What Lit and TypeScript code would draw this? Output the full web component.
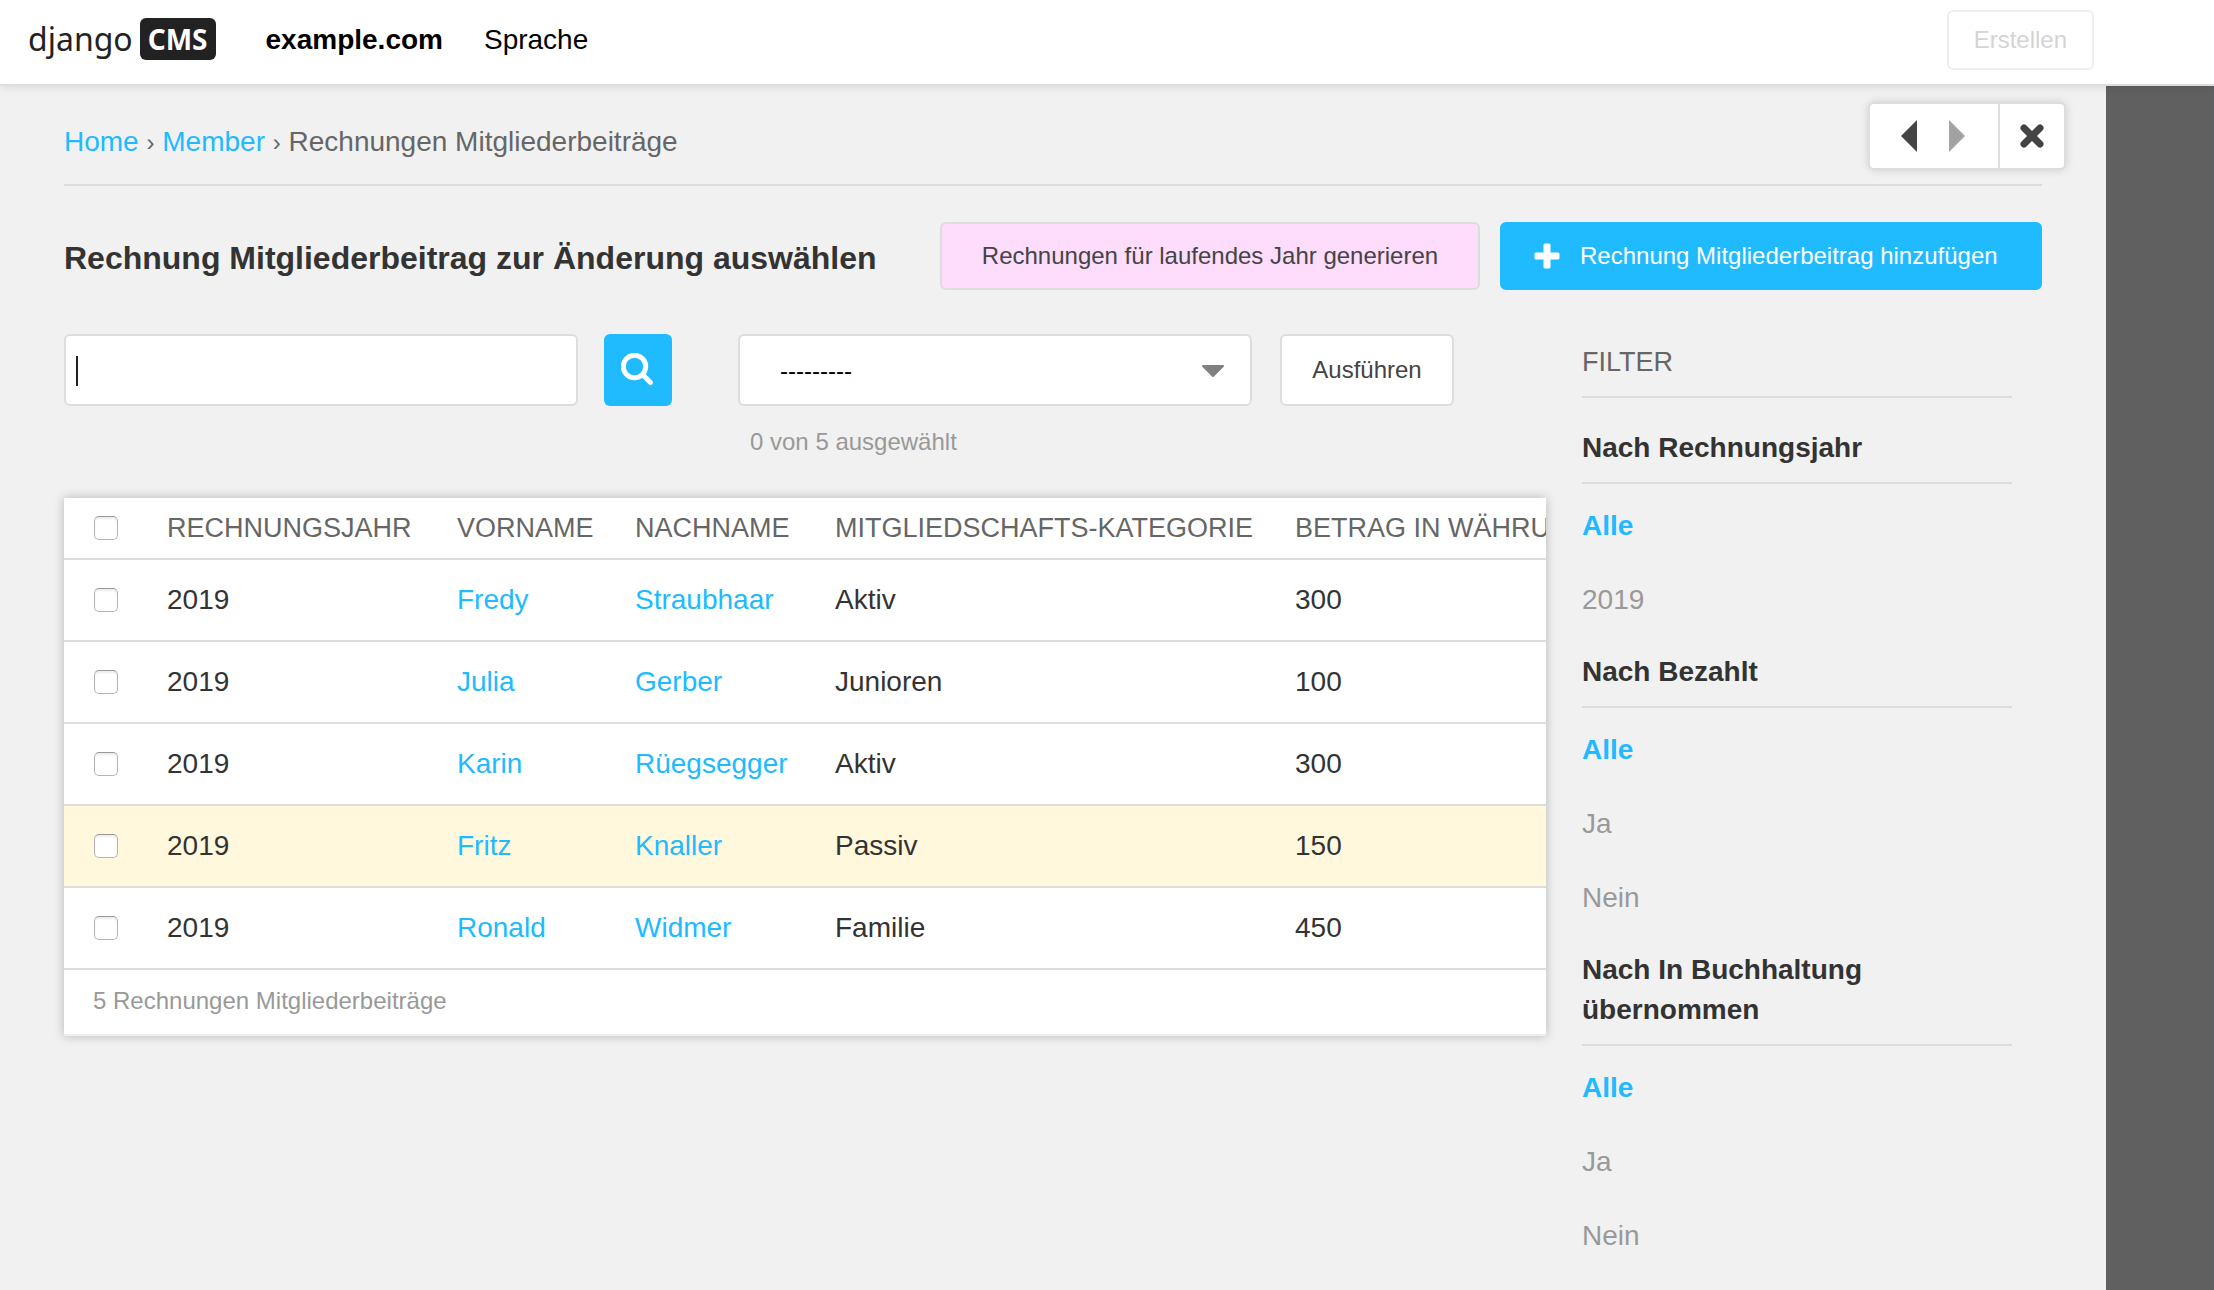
import { LitElement, html, css } from "lit";
import { customElement, state } from "lit/decorators.js";
import { classMap } from "lit/directives/class-map.js";

interface Invoice {
  year: string;
  first: string;
  last: string;
  category: string;
  amount: string;
  highlight?: boolean;
}

const INVOICES: Invoice[] = [
  { year: "2019", first: "Fredy", last: "Straubhaar", category: "Aktiv", amount: "300" },
  { year: "2019", first: "Julia", last: "Gerber", category: "Junioren", amount: "100" },
  { year: "2019", first: "Karin", last: "Rüegsegger", category: "Aktiv", amount: "300" },
  { year: "2019", first: "Fritz", last: "Knaller", category: "Passiv", amount: "150", highlight: true },
  { year: "2019", first: "Ronald", last: "Widmer", category: "Familie", amount: "450" },
];

const FILTERS = [
  { title: "Nach Rechnungsjahr", options: ["Alle", "2019"] },
  { title: "Nach Bezahlt", options: ["Alle", "Ja", "Nein"] },
  { title: "Nach In Buchhaltung übernommen", options: ["Alle", "Ja", "Nein"] },
];

@customElement("cms-toolbar")
class CmsToolbar extends LitElement {
  static styles = css`
    :host {
      display: block;
      position: relative;
      z-index: 1;
    }
    .bar {
      display: flex;
      align-items: center;
      height: 84px;
      padding: 0 120px 0 28px;
      background: #fff;
      border-bottom: 2px solid #ddd;
      box-shadow: 0 0 10px rgba(0, 0, 0, 0.12);
    }
    .logo {
      display: flex;
      align-items: center;
      gap: 7px;
      margin: 0 50px 6px 0;
      font: 32px/42px "Noto Sans", sans-serif;
      color: #222;
      text-decoration: none;
    }
    .badge {
      padding: 0 8px;
      border-radius: 6px;
      background: #222;
      color: #fff;
      font-size: 28px;
      font-weight: 700;
    }
    .menu {
      display: flex;
      gap: 41px;
      margin-right: auto;
      padding-bottom: 4px;
      font-size: 28px;
      line-height: 32px;
    }
    .menu a {
      color: #000;
      text-decoration: none;
    }
    .site {
      font-weight: 700;
    }
    .create {
      height: 60px;
      margin-bottom: 4px;
      padding: 0 25px;
      border: 2px solid #eee;
      border-radius: 6px;
      background: #fff;
      color: #d4d4d4;
      font: 24px "Liberation Sans", sans-serif;
    }
  `;

  render() {
    return html`
      <header class="bar">
        <a class="logo" href="#"><span>django</span><span class="badge">CMS</span></a>
        <nav class="menu">
          <a class="site" href="#">example.com</a>
          <a href="#">Sprache</a>
        </nav>
        <button class="create" disabled>Erstellen</button>
      </header>
    `;
  }
}

@customElement("filter-panel")
class FilterPanel extends LitElement {
  static styles = css`
    :host {
      display: block;
      line-height: 40px;
    }
    h2,
    h3 {
      margin: 0;
      padding-bottom: 14px;
      border-bottom: 2px solid #ddd;
      font-size: 28px;
    }
    h2 {
      margin-bottom: 30px;
      color: #666;
      font-size: 27px;
      font-weight: 400;
      text-transform: uppercase;
    }
    h3 {
      color: #333;
      font-weight: 700;
    }
    .title {
      display: block;
      max-width: 340px;
    }
    ul {
      display: grid;
      gap: 34px;
      margin: 22px 0 32px;
      padding: 0;
      list-style: none;
    }
    a {
      color: #999;
      text-decoration: none;
    }
    .selected {
      color: #20bbff;
      font-weight: 700;
    }
  `;

  render() {
    return html`
      <h2>Filter</h2>
      ${FILTERS.map(
        (group) => html`
          <h3><span class="title">${group.title}</span></h3>
          <ul>
            ${group.options.map(
              (option, i) =>
                html`<li><a href="#" class=${classMap({ selected: i === 0 })}>${option}</a></li>`
            )}
          </ul>
        `
      )}
    `;
  }
}

@customElement("invoice-table")
class InvoiceTable extends LitElement {
  static styles = css`
    :host {
      display: block;
      background: #fff;
      box-shadow: 0 0 10px rgba(0, 0, 0, 0.25);
    }
    .scroll {
      overflow: hidden;
    }
    table {
      border-collapse: separate;
      border-spacing: 0;
      table-layout: fixed;
      width: 100%;
    }
    .c-check {
      width: 83px;
    }
    .c-year {
      width: 290px;
    }
    .c-first {
      width: 178px;
    }
    .c-last {
      width: 200px;
    }
    .c-category {
      width: 460px;
    }
    th,
    td {
      box-sizing: border-box;
      padding: 0 20px;
      border-bottom: 2px solid #ddd;
      text-align: left;
      white-space: nowrap;
    }
    th {
      height: 62px;
      color: #666;
      font-size: 27px;
      font-weight: 400;
      text-transform: uppercase;
    }
    td {
      height: 82px;
      color: #333;
    }
    th:first-child,
    td:first-child {
      padding: 0 0 0 30px;
    }
    .highlight td {
      background: #fff8dc;
    }
    a {
      color: #20bbff;
      text-decoration: none;
    }
    .tick {
      display: block;
      appearance: none;
      box-sizing: border-box;
      width: 24px;
      height: 24px;
      margin: 0;
      border: 1px solid #b4b4b4;
      border-top-color: #999;
      border-radius: 5px;
      background: #fff;
      box-shadow: inset 0 2px 2px rgba(0, 0, 0, 0.08);
    }
    .tick:checked {
      background: #20bbff;
    }
    .count {
      margin: 0;
      padding: 12px 29px 14px;
      border-bottom: 2px solid #eee;
      color: #999;
      font-size: 24px;
      line-height: 38px;
    }
  `;

  render() {
    return html`
      <div class="scroll">
        <table>
          <colgroup>
            <col class="c-check" />
            <col class="c-year" />
            <col class="c-first" />
            <col class="c-last" />
            <col class="c-category" />
            <col />
          </colgroup>
          <thead>
            <tr>
              <th><input class="tick" type="checkbox" aria-label="Alle auswählen" /></th>
              <th>Rechnungsjahr</th>
              <th>Vorname</th>
              <th>Nachname</th>
              <th>Mitgliedschafts-Kategorie</th>
              <th>Betrag in Währung</th>
            </tr>
          </thead>
          <tbody>
            ${INVOICES.map(
              (row) => html`
                <tr class=${classMap({ highlight: !!row.highlight })}>
                  <td>
                    <input class="tick" type="checkbox" aria-label="${row.first} ${row.last} auswählen" />
                  </td>
                  <td>${row.year}</td>
                  <td><a href="#">${row.first}</a></td>
                  <td><a href="#">${row.last}</a></td>
                  <td>${row.category}</td>
                  <td>${row.amount}</td>
                </tr>
              `
            )}
          </tbody>
        </table>
      </div>
      <p class="count">${INVOICES.length} Rechnungen Mitgliederbeiträge</p>
    `;
  }
}

@customElement("app-root")
class AppRoot extends LitElement {
  @state() private query = "";

  static styles = css`
    :host {
      display: flex;
      flex-direction: column;
      min-height: 100vh;
      background: #606060;
      font: 28px/32px "Liberation Sans", Arial, sans-serif;
    }
    .sheet {
      position: relative;
      flex: 1;
      margin-right: 108px;
      padding: 40px 64px 0;
      background: #f1f1f1;
      color: #333;
    }
    .window {
      position: absolute;
      top: 16px;
      right: 40px;
      display: flex;
      border: 2px solid #ddd;
      border-radius: 6px;
      background: #fff;
      box-shadow: 0 0 8px rgba(0, 0, 0, 0.15);
    }
    .window button {
      display: grid;
      place-items: center;
      height: 64px;
      padding: 0;
      border: 0;
      background: none;
    }
    .window .step {
      width: 48px;
    }
    .history {
      display: flex;
      padding: 0 17px 0 15px;
    }
    .window .close {
      width: 66px;
      border-left: 2px solid #ddd;
    }
    svg {
      display: block;
    }
    a {
      color: #20bbff;
      text-decoration: none;
    }
    .crumbs {
      padding-bottom: 26px;
      border-bottom: 2px solid #ddd;
      color: #666;
    }
    .divider {
      font-size: 24px;
      line-height: 24px;
    }
    .heading {
      display: flex;
      align-items: center;
      gap: 20px;
      margin: 36px 0 44px;
    }
    h1 {
      margin: 0 auto 0 0;
      padding-top: 4px;
      font-size: 32px;
      line-height: 36px;
    }
    .button {
      display: flex;
      align-items: center;
      justify-content: center;
      box-sizing: border-box;
      height: 68px;
      border: 2px solid #ddd;
      border-radius: 6px;
      color: #444;
      font-size: 24px;
      white-space: nowrap;
    }
    .generate {
      width: 540px;
      background: #fddcfc;
    }
    .add {
      justify-content: flex-start;
      gap: 20px;
      width: 542px;
      padding-left: 32px;
      border-color: #20bbff;
      background: #20bbff;
      color: #fff;
    }
    .columns {
      display: flex;
      align-items: flex-start;
      gap: 36px;
      padding-right: 30px;
    }
    .main {
      flex: 1;
      min-width: 0;
    }
    filter-panel {
      width: 430px;
      padding-top: 8px;
    }
    .controls {
      display: flex;
      align-items: flex-start;
      margin-bottom: 40px;
    }
    .field {
      box-sizing: border-box;
      width: 514px;
      height: 72px;
      border: 2px solid #ddd;
      border-radius: 6px;
      background-color: #fff;
      font: 28px "Liberation Sans", sans-serif;
      outline: none;
    }
    .query {
      margin-right: 26px;
      padding: 0 10px;
    }
    .query.empty {
      background-image: linear-gradient(#222, #222);
      background-position: 10px 20px;
      background-size: 2px 30px;
      background-repeat: no-repeat;
    }
    .search {
      display: grid;
      place-items: center;
      width: 68px;
      height: 72px;
      margin-right: 66px;
      padding: 0;
      border: 0;
      border-radius: 6px;
      background: #20bbff;
    }
    .picker {
      position: relative;
      margin-right: 28px;
    }
    .picker svg {
      position: absolute;
      top: 30px;
      right: 27px;
      pointer-events: none;
    }
    .picker select {
      display: block;
      padding: 0 40px;
      appearance: none;
      color: #000;
      font-size: 24px;
    }
    .selected {
      margin: 20px 0 0 12px;
      color: #999;
      font-size: 24px;
    }
    .run {
      width: 174px;
      height: 72px;
      background: #fff;
      font-family: inherit;
    }
  `;

  private onInput(event: Event) {
    this.query = (event.target as HTMLInputElement).value;
  }

  render() {
    return html`
      <cms-toolbar></cms-toolbar>
      <div class="sheet">
        <div class="window">
          <div class="history">
            <button class="step" aria-label="Zurück">
              <svg width="16" height="32" viewBox="0 0 16 32"><path d="M16 0v32L0 16z" fill="#444" /></svg>
            </button>
            <button class="step" aria-label="Vorwärts">
              <svg width="16" height="32" viewBox="0 0 16 32"><path d="M0 0v32l16-16z" fill="#a2a2a2" /></svg>
            </button>
          </div>
          <button class="close" aria-label="Schliessen">
            <svg width="24" height="24" viewBox="0 0 24 24">
              <path d="M4 4l16 16M20 4L4 20" stroke="#444" stroke-width="7" stroke-linecap="round" />
            </svg>
          </button>
        </div>
        <nav class="crumbs">
          <a href="#">Home</a> <span class="divider">›</span> <a href="#">Member</a>
          <span class="divider">›</span> Rechnungen Mitgliederbeiträge
        </nav>
        <div class="heading">
          <h1>Rechnung Mitgliederbeitrag zur Änderung auswählen</h1>
          <a class="button generate" href="#">Rechnungen für laufendes Jahr generieren</a>
          <a class="button add" href="#">
            <svg width="26" height="26" viewBox="0 0 26 26" fill="#fff">
              <rect x="9.5" y="0.5" width="7" height="25" rx="1.5" />
              <rect x="0.5" y="9.5" width="25" height="7" rx="1.5" />
            </svg>
            Rechnung Mitgliederbeitrag hinzufügen
          </a>
        </div>
        <div class="columns">
          <main class="main">
            <div class="controls">
              <input
                class=${classMap({ field: true, query: true, empty: !this.query })}
                type="text"
                aria-label="Suche"
                .value=${this.query}
                @input=${this.onInput}
              />
              <button class="search" aria-label="Suchen">
                <svg width="34" height="34" viewBox="0 0 34 34" fill="none" stroke="#fff">
                  <circle cx="13.5" cy="13.5" r="11.2" stroke-width="5" />
                  <path d="M22 22l7.5 7.5" stroke-width="5" stroke-linecap="round" />
                </svg>
              </button>
              <div class="picker">
                <select class="field" aria-label="Aktion">
                  <option>---------</option>
                </select>
                <svg width="24" height="14" viewBox="0 0 24 14">
                  <path d="M2 2h20L12 12z" fill="#808080" stroke="#808080" stroke-width="2" stroke-linejoin="round" />
                </svg>
                <p class="selected">0 von 5 ausgewählt</p>
              </div>
              <button class="button run">Ausführen</button>
            </div>
            <invoice-table></invoice-table>
          </main>
          <filter-panel></filter-panel>
        </div>
      </div>
    `;
  }
}
